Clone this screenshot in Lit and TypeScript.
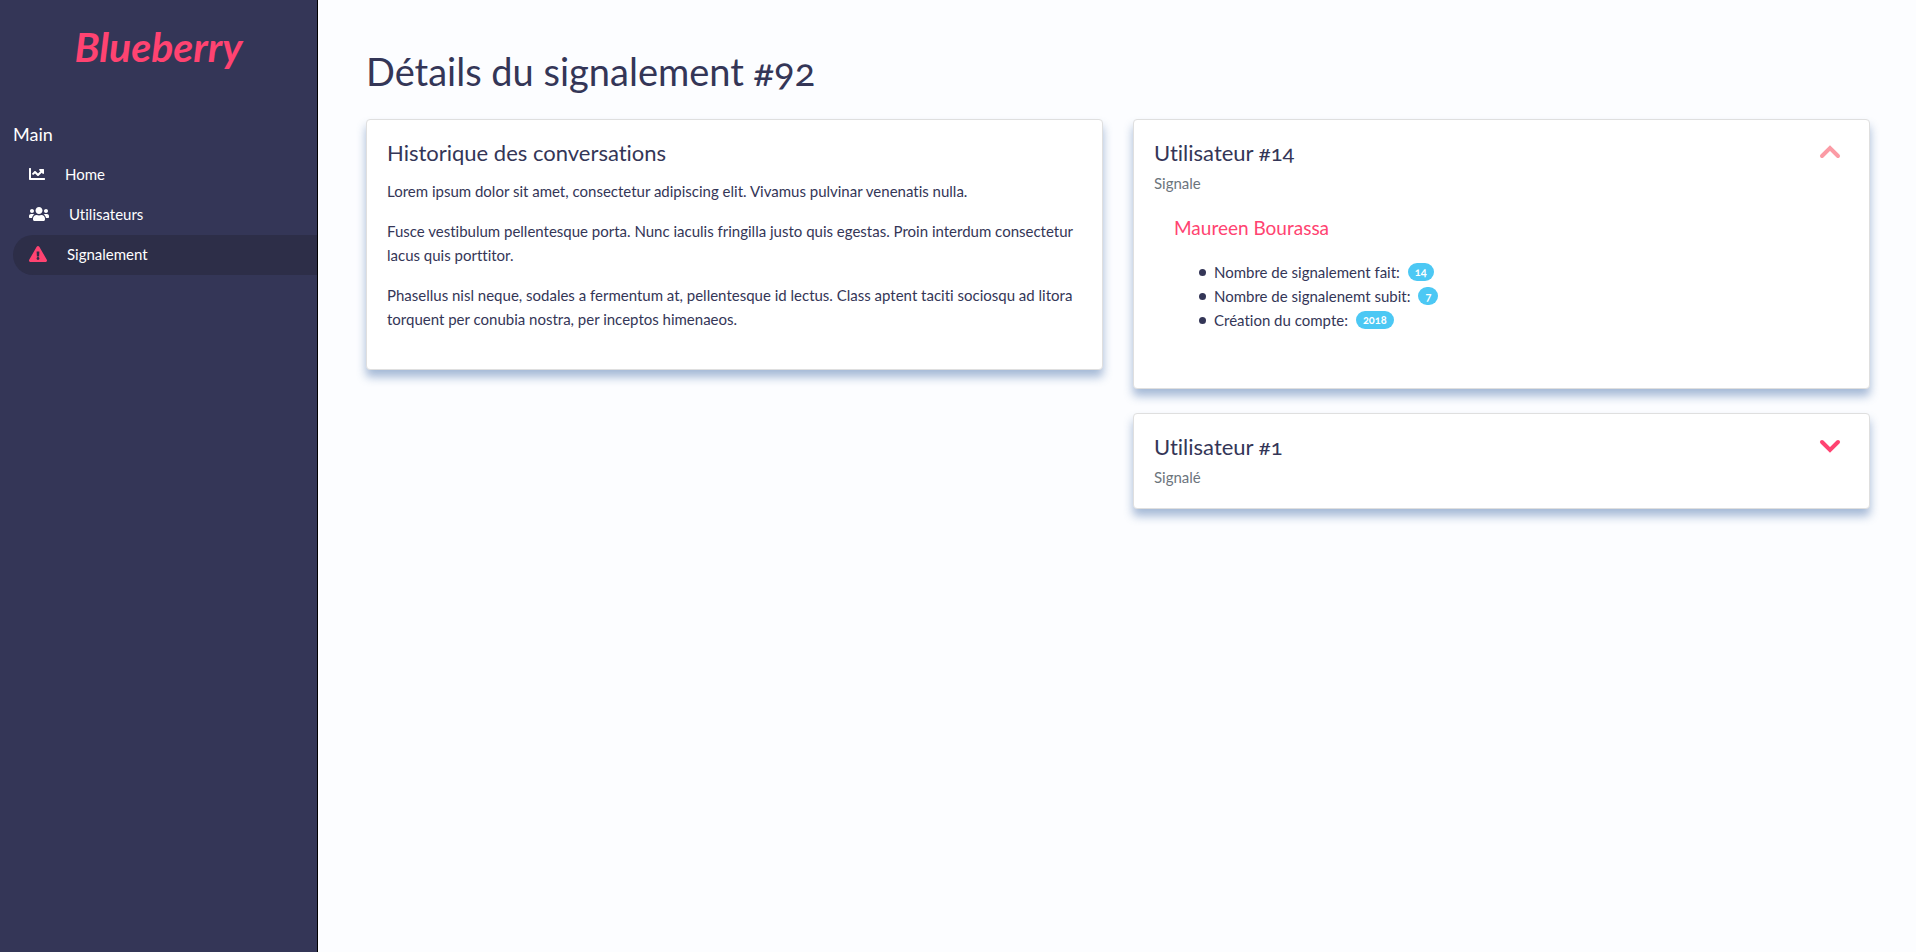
import { LitElement, html, svg, css } from "lit";
import { customElement, state } from "lit/decorators.js";

const icons = {
  chart: {
    width: 16,
    box: "0 0 512 512",
    path: "M496 384H64V80c0-8.84-7.16-16-16-16H16C7.16 64 0 71.16 0 80v336c0 17.67 14.33 32 32 32h464c8.84 0 16-7.16 16-16v-32c0-8.84-7.16-16-16-16zM464 96H345.94c-21.38 0-32.09 25.85-16.97 40.97l32.4 32.4L288 242.75l-73.37-73.37c-12.5-12.5-32.76-12.5-45.25 0l-68.69 68.69c-6.25 6.25-6.25 16.38 0 22.63l22.62 22.62c6.25 6.25 16.38 6.25 22.63 0L192 237.25l73.37 73.37c12.5 12.5 32.76 12.5 45.25 0l96-96 32.4 32.4c15.12 15.12 40.97 4.41 40.97-16.97V112c.01-8.84-7.15-16-15.99-16z",
  },
  users: {
    width: 20,
    box: "0 0 640 512",
    path: "M96 224c35.3 0 64-28.7 64-64s-28.7-64-64-64-64 28.7-64 64 28.7 64 64 64zm448 0c35.3 0 64-28.7 64-64s-28.7-64-64-64-64 28.7-64 64 28.7 64 64 64zm32 32h-64c-17.6 0-33.5 7.1-45.1 18.6 40.3 22.1 68.9 62 75.1 109.4h66c17.7 0 32-14.3 32-32v-32c0-35.3-28.7-64-64-64zm-256 0c61.9 0 112-50.1 112-112S381.9 32 320 32 208 82.1 208 144s50.1 112 112 112zm76.8 32h-8.3c-20.8 10-43.9 16-68.5 16s-47.6-6-68.5-16h-8.3C179.6 288 128 339.6 128 403.2V432c0 26.5 21.5 48 48 48h288c26.5 0 48-21.5 48-48v-28.8c0-63.6-51.6-115.2-115.2-115.2zm-223.7-13.4C161.5 263.1 145.6 256 128 256H64c-35.3 0-64 28.7-64 64v32c0 17.7 14.3 32 32 32h65.9c6.3-47.4 34.9-87.3 75.2-109.4z",
  },
  warning: {
    width: 18,
    box: "0 0 576 512",
    path: "M569.517 440.013C587.975 472.007 564.806 512 527.94 512H48.054c-36.937 0-59.999-40.055-41.577-71.987L246.423 23.985c18.467-32.009 64.72-31.951 83.154 0l239.94 416.028zM288 354c-25.405 0-46 20.595-46 46s20.595 46 46 46 46-20.595 46-46-20.595-46-46-46zm-43.673-165.346l7.418 136c.347 6.364 5.609 11.346 11.982 11.346h48.546c6.373 0 11.635-4.982 11.982-11.346l7.418-136c.375-6.874-5.098-12.654-11.982-12.654h-63.383c-6.884 0-12.356 5.78-11.981 12.654z",
  },
};

const links: { label: string; icon: keyof typeof icons; active?: boolean }[] = [
  { label: "Home", icon: "chart" },
  { label: "Utilisateurs", icon: "users" },
  { label: "Signalement", icon: "warning", active: true },
];

const facts = [
  { label: "Nombre de signalement fait:", value: "14" },
  { label: "Nombre de signalenemt subit:", value: "7" },
  { label: "Création du compte:", value: "2018" },
];

@customElement("app-sidebar")
export class AppSidebar extends LitElement {
  static styles = css`
    :host {
      display: block;
      box-sizing: border-box;
      background: #343657;
      border-right: 1px solid #000;
      color: #fff;
    }
    .brand {
      display: block;
      padding: 20px 0 48px;
      text-align: center;
      font-size: 41px;
      line-height: 54px;
      font-weight: 700;
      font-style: italic;
      color: #ff4371;
      text-decoration: none;
    }
    .heading {
      margin: 0;
      padding: 0 0 9px 13px;
      font-size: 18px;
      line-height: 24px;
      font-weight: 400;
    }
    .links {
      list-style: none;
      margin: 0;
      padding: 0 0 0 13px;
    }
    .link {
      display: flex;
      align-items: center;
      gap: 20px;
      box-sizing: border-box;
      height: 40px;
      padding: 0 0 2px 16px;
      border-radius: 20px 0 0 20px;
      color: #fff;
      text-decoration: none;
    }
    .link.active {
      background: #2d2e48;
    }
    .link.active svg {
      color: #ff4371;
    }
  `;

  render() {
    return html`
      <a class="brand" href="#">Blueberry</a>
      <h5 class="heading">Main</h5>
      <nav>
        <ul class="links">
          ${links.map(
            (l) => html`<li>
              <a class="link ${l.active ? "active" : ""}" href="#">
                <svg width=${icons[l.icon].width} height="16" viewBox=${icons[l.icon].box} fill="currentColor" aria-hidden="true">
                  ${svg`<path d=${icons[l.icon].path}></path>`}
                </svg>
                <span>${l.label}</span>
              </a>
            </li>`
          )}
        </ul>
      </nav>
    `;
  }
}

@customElement("app-root")
export class AppRoot extends LitElement {
  static styles = css`
    :host {
      display: grid;
      grid-template-columns: 318px minmax(0, 1fr);
      min-height: 100vh;
      background: #fcfdff;
      color: #343657;
      font: 400 15px/24px Lato, "Open Sans", sans-serif;
      font-variant-ligatures: none;
      font-variant-numeric: oldstyle-nums;
    }
    .main {
      padding: 47px 46px 48px 48px;
    }
    .title {
      margin: 0 0 24px;
      font-size: 38px;
      line-height: 48px;
      font-weight: 400;
    }
    .columns {
      display: grid;
      grid-template-columns: repeat(2, minmax(0, 1fr));
      align-items: start;
      gap: 30px;
    }
    .stack {
      display: grid;
      gap: 24px;
    }
    .card {
      padding: 20px;
      background: #fff;
      border: 1px solid #dfdfdf;
      border-radius: 4px;
      box-shadow: 0 7px 10px 0 rgba(70, 110, 170, 0.48);
    }
    .card-title {
      margin: 0 0 13px;
      font-size: 22px;
      line-height: 26px;
      font-weight: 400;
    }
    .text {
      margin: 0 0 16px;
    }
    .text:last-child {
      margin-bottom: 18px;
    }
    .head {
      display: flex;
      justify-content: space-between;
      align-items: flex-start;
    }
    .head .card-title {
      margin-bottom: 7px;
    }
    .subtitle {
      margin: 0 0 1px;
      font-size: 15px;
      line-height: 20px;
      font-weight: 400;
      color: #6c757d;
    }
    .toggle {
      display: block;
      margin: 0;
      padding: 0 8px;
      border: 0;
      background: none;
      color: #ff4371;
      cursor: pointer;
    }
    .toggle.open {
      color: #fb9ba5;
    }
    .toggle svg {
      display: block;
    }
    .details {
      padding: 22px 20px 36px;
    }
    .name {
      margin: 0 0 20px;
      font-size: 19px;
      line-height: 24px;
      font-weight: 400;
      color: #ff4371;
    }
    .facts {
      list-style: none;
      margin: 0;
      padding-left: 25px;
    }
    .fact {
      display: flex;
      align-items: center;
      gap: 8px;
    }
    .fact::before {
      content: "";
      width: 7px;
      height: 7px;
      border-radius: 50%;
      background: currentColor;
    }
    .badge {
      padding: 3px 7px;
      border-radius: 9px;
      background: #4cc8f4;
      color: #fff;
      font-size: 11px;
      line-height: 12px;
      font-weight: 700;
    }
  `;

  @state() private opened: Record<number, boolean> = { 14: true, 1: false };

  private toggle(id: number) {
    this.opened = { ...this.opened, [id]: !this.opened[id] };
  }

  private header(id: number, role: string) {
    const open = this.opened[id];
    return html`<div class="head">
      <div>
        <h4 class="card-title">Utilisateur #${id}</h4>
        <h6 class="subtitle">${role}</h6>
      </div>
      <button
        class="toggle ${open ? "open" : ""}"
        aria-expanded=${open ? "true" : "false"}
        aria-label="Utilisateur #${id}"
        @click=${() => this.toggle(id)}
      >
        <svg width="22" height="24" viewBox="0 0 22 24" fill="none" stroke="currentColor" stroke-width="4" stroke-linecap="round">
          <path d=${open ? "M3 16L11 8L19 16" : "M3 8L11 16L19 8"}></path>
        </svg>
      </button>
    </div>`;
  }

  render() {
    return html`
      <app-sidebar></app-sidebar>
      <main class="main">
        <h1 class="title">Détails du signalement #92</h1>
        <div class="columns">
          <section class="card">
            <h4 class="card-title">Historique des conversations</h4>
            <p class="text">Lorem ipsum dolor sit amet, consectetur adipiscing elit. Vivamus pulvinar venenatis nulla.</p>
            <p class="text">Fusce vestibulum pellentesque porta. Nunc iaculis fringilla justo quis egestas. Proin interdum consectetur lacus quis porttitor.</p>
            <p class="text">Phasellus nisl neque, sodales a fermentum at, pellentesque id lectus. Class aptent taciti sociosqu ad litora torquent per conubia nostra, per inceptos himenaeos.</p>
          </section>
          <div class="stack">
            <section class="card">
              ${this.header(14, "Signale")}
              ${this.opened[14]
                ? html`<div class="details">
                    <h5 class="name">Maureen Bourassa</h5>
                    <ul class="facts">
                      ${facts.map(
                        (f) => html`<li class="fact"><span>${f.label}</span><span class="badge">${f.value}</span></li>`
                      )}
                    </ul>
                  </div>`
                : null}
            </section>
            <section class="card">${this.header(1, "Signalé")}</section>
          </div>
        </div>
      </main>
    `;
  }
}
